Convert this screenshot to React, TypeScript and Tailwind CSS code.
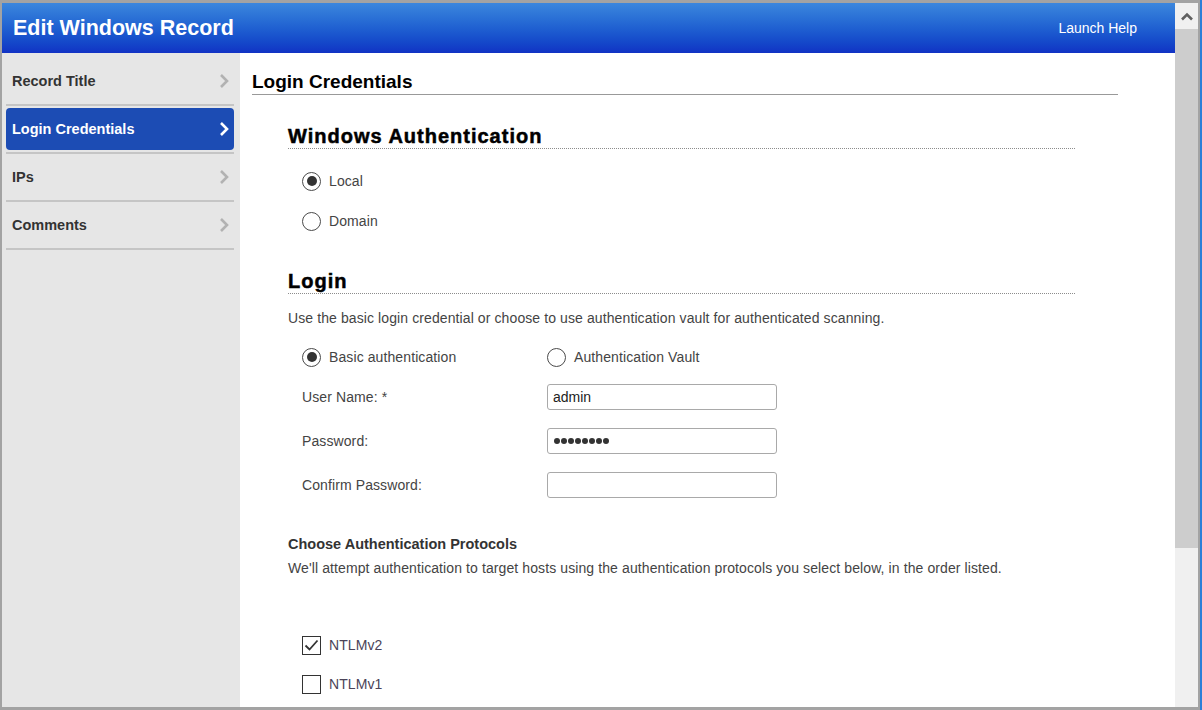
import React from "react";

const FONT = { fontFamily: '"Liberation Sans", Arial, sans-serif' };

function Chevron({ white }: { white?: boolean }) {
  return (
    <svg width="10" height="16" viewBox="0 0 10 16" className="shrink-0">
      <polyline
        points="2,2 8,8 2,14"
        fill="none"
        stroke={white ? "#ffffff" : "#b2b2b2"}
        strokeWidth="2.6"
        strokeLinecap="butt"
        strokeLinejoin="miter"
      />
    </svg>
  );
}

function Radio({ checked, label }: { checked?: boolean; label: string }) {
  return (
    <div className="flex items-center h-[20px]">
      <div className="w-[19px] h-[19px] rounded-full border-[1.5px] border-[#4a4a4a] bg-white flex items-center justify-center shrink-0">
        {checked && <div className="w-[10px] h-[10px] rounded-full bg-[#333333]" />}
      </div>
      <span className="ml-[8px] text-[14px] tracking-[0.1px] text-[#444444] leading-[18px]">{label}</span>
    </div>
  );
}

function Checkbox({ checked, label }: { checked?: boolean; label: string }) {
  return (
    <div className="flex items-center h-[20px]">
      <div className="w-[19px] h-[19px] border-[1.5px] border-[#333333] bg-white flex items-center justify-center shrink-0">
        {checked && (
          <svg width="15" height="13" viewBox="0 0 15 13">
            <polyline points="1.5,6.5 5.5,10.5 13.5,1.5" fill="none" stroke="#333333" strokeWidth="1.8" />
          </svg>
        )}
      </div>
      <span className="ml-[8px] text-[14px] tracking-[0.1px] text-[#4b4358] leading-[18px]">{label}</span>
    </div>
  );
}

function Field({ label, children }: { label: string; children?: React.ReactNode }) {
  return (
    <div className="flex items-center h-[26px]">
      <div className="w-[245px] text-[14px] tracking-[0.1px] text-[#444444] leading-[18px]">{label}</div>
      <div className="w-[230px] h-[26px] rounded-[3px] border border-[#a9a9a9] bg-white flex items-center px-[5px] text-[14px] text-[#222222]">
        {children}
      </div>
    </div>
  );
}

const navItems = ["Record Title", "Login Credentials", "IPs", "Comments"];

export default function App() {
  return (
    <div className="w-[1202px] h-[710px] bg-[#a3a3a3] flex overflow-hidden" style={FONT}>
      <div className="flex pl-[2px] pt-[3px] pb-[3px] pr-[2px]">
        <div className="w-[1196px] h-[704px] flex bg-white">
          {/* main */}
          <div className="w-[1173px] h-full flex flex-col">
            <div className="h-[50px] shrink-0 bg-linear-to-b from-[#3c87dd] to-[#1232c4] flex items-center justify-between pl-[11px] pr-[38px]">
              <span className="text-white font-bold text-[21.5px] leading-[26px]">Edit Windows Record</span>
              <span className="text-white text-[14px] leading-[18px]">Launch Help</span>
            </div>
            <div className="flex flex-1 min-h-0">
              {/* sidebar */}
              <div className="w-[238px] shrink-0 bg-[#e6e6e6] pl-[4px] pr-[6px] pt-[5px]">
                {navItems.map((item) => {
                  const active = item === "Login Credentials";
                  return (
                    <div key={item}>
                      <div className="h-[46px] flex items-center">
                        {active ? (
                          <div className="w-full h-[42px] rounded-[4px] bg-[#1c4cb4] flex items-center justify-between pl-[6px] pr-[5px]">
                            <span className="text-white font-bold text-[14.5px] leading-[18px]">{item}</span>
                            <Chevron white />
                          </div>
                        ) : (
                          <div className="w-full flex items-center justify-between pl-[6px] pr-[5px]">
                            <span className="text-[#333333] font-bold text-[14.5px] leading-[18px]">{item}</span>
                            <Chevron />
                          </div>
                        )}
                      </div>
                      <div className="h-[2px] bg-[#c5c5c5]" />
                    </div>
                  );
                })}
              </div>
              {/* content */}
              <div className="flex-1 min-w-0 overflow-hidden pl-[12px]">
                <div className="w-[866px] pt-[18px] pb-[1px] border-b border-[#999999]">
                  <h1 className="text-[19px] font-bold text-black leading-[22px]">Login Credentials</h1>
                </div>
                <div className="ml-[36px] w-[787px]">
                  <div className="mt-[29px] border-b border-dotted border-[#8c8c8c]">
                    <h2 className="text-[20px] font-bold tracking-[1px] text-black leading-[24px] [-webkit-text-stroke:0.5px_black]">
                      Windows Authentication
                    </h2>
                  </div>
                  <div className="mt-[22px] ml-[14px] flex flex-col gap-[20px]">
                    <Radio checked label="Local" />
                    <Radio label="Domain" />
                  </div>
                  <div className="mt-[38px] border-b border-dotted border-[#8c8c8c]">
                    <h2 className="text-[20px] font-bold tracking-[1px] text-black leading-[24px] [-webkit-text-stroke:0.5px_black]">
                      Login
                    </h2>
                  </div>
                  <p className="mt-[15px] text-[14px] tracking-[0.1px] text-[#444444] leading-[18px]">
                    Use the basic login credential or choose to use authentication vault for authenticated scanning.
                  </p>
                  <div className="mt-[20px] ml-[14px] flex">
                    <div className="w-[245px]">
                      <Radio checked label="Basic authentication" />
                    </div>
                    <Radio label="Authentication Vault" />
                  </div>
                  <div className="mt-[17px] ml-[14px] flex flex-col gap-[18px]">
                    <Field label="User Name: *">admin</Field>
                    <Field label="Password:">
                      <div className="flex gap-[1px] pl-[1px]">
                        {Array.from({ length: 8 }).map((_, i) => (
                          <div key={i} className="w-[6px] h-[6px] rounded-full bg-[#333333]" />
                        ))}
                      </div>
                    </Field>
                    <Field label="Confirm Password:" />
                  </div>
                  <div className="mt-[37px] text-[14.5px] font-bold text-[#333333] leading-[18px]">
                    Choose Authentication Protocols
                  </div>
                  <p className="mt-[6px] text-[14px] tracking-[0.1px] text-[#444444] leading-[18px]">
                    We'll attempt authentication to target hosts using the authentication protocols you select below, in the order listed.
                  </p>
                  <div className="mt-[58px] ml-[14px] flex flex-col gap-[19px]">
                    <Checkbox checked label="NTLMv2" />
                    <Checkbox label="NTLMv1" />
                  </div>
                </div>
              </div>
            </div>
          </div>
          {/* scrollbar */}
          <div className="w-[23px] h-full flex flex-col bg-[#f0f0f0]">
            <div className="h-[26px] flex items-center justify-center bg-[#f0f0f0]">
              <svg width="12" height="9" viewBox="0 0 12 9">
                <polyline points="1,7.5 6,2.5 11,7.5" fill="none" stroke="#606060" strokeWidth="2.6" />
              </svg>
            </div>
            <div className="h-[519px] bg-[#cdcdcd]" />
            <div className="flex-1 bg-[#f0f0f0]" />
          </div>
        </div>
      </div>
      <div className="w-[2px] h-full bg-[#2b7fd8]" />
    </div>
  );
}
